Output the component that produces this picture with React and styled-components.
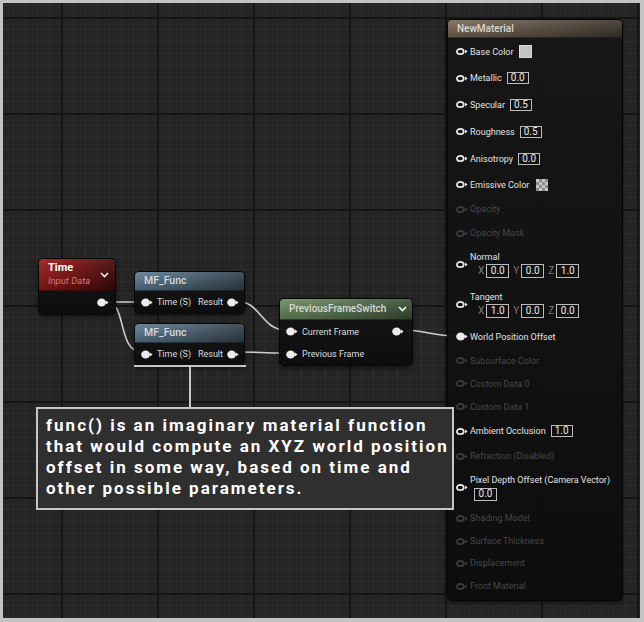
import React from "react";
import styled, { createGlobalStyle } from "styled-components";

const Global = createGlobalStyle`
  html, body { margin: 0; padding: 0; background: #c3c3c3; }
  body { font-family: Roboto, "Noto Sans", Arial, sans-serif; }
`;

const Frame = styled.div`
  width: 644px;
  height: 622px;
  box-sizing: border-box;
  border-style: solid;
  border-color: #c3c3c3;
  border-width: 3px 4px 4px 3px;
  overflow: hidden;
`;

const Canvas = styled.div`
  position: relative;
  width: 100%;
  height: 100%;
  background-color: #252525;
  background-image:
    linear-gradient(to right, #151515 2px, transparent 2px),
    linear-gradient(to bottom, #151515 2px, transparent 2px),
    linear-gradient(to right, #2e2e2e 1px, transparent 1px),
    linear-gradient(to bottom, #2e2e2e 1px, transparent 1px);
  background-size: 96px 96px, 96px 96px, 12px 12px, 12px 12px;
  background-position: 58px 14px, 58px 14px, 10px 2px, 10px 2px;
`;

const Wires = styled.svg`
  position: absolute;
  left: 0;
  top: 0;
  width: 100%;
  height: 100%;
`;

const Node = styled.div`
  position: absolute;
  left: ${(p) => p.x}px;
  top: ${(p) => p.y}px;
  width: ${(p) => p.w}px;
  box-sizing: border-box;
  display: flex;
  flex-direction: column;
  background: linear-gradient(to bottom, rgba(22, 22, 22, 0.97), rgba(12, 12, 12, 0.97));
  border: 1px solid #060606;
  border-radius: 5px;
  box-shadow: 0 2px 5px rgba(0, 0, 0, 0.55);
  overflow: hidden;
`;

const Header = styled.div`
  height: ${(p) => p.h}px;
  box-sizing: border-box;
  display: flex;
  align-items: center;
  justify-content: space-between;
  padding: 0 ${(p) => p.pr || 6}px 0 ${(p) => p.pl || 9}px;
  background:
    linear-gradient(to bottom, rgba(255, 255, 255, 0.08), rgba(0, 0, 0, 0.25)),
    ${(p) => p.bg};
  border-bottom: 1px solid rgba(0, 0, 0, 0.6);
`;

const TitleStack = styled.div`
  display: flex;
  flex-direction: column;
  gap: 1px;
`;

const Title = styled.span`
  color: ${(p) => p.c || "#d8d8d8"};
  font-size: ${(p) => p.fs || 10}px;
  font-weight: ${(p) => p.fw || 500};
  line-height: 12px;
  white-space: nowrap;
`;

const Subtitle = styled.span`
  color: #d27a72;
  font-size: 9.5px;
  font-style: italic;
  line-height: 12px;
`;

const Body = styled.div`
  display: flex;
  flex-direction: column;
  padding: ${(p) => p.pad || "0"};
`;

const PinRow = styled.div`
  height: ${(p) => p.h}px;
  display: flex;
  align-items: center;
  justify-content: ${(p) => p.justify || "flex-start"};
  padding: 0 ${(p) => p.pr || 0}px 0 ${(p) => p.pl || 0}px;
  gap: 4px;
`;

const PinLabel = styled.span`
  color: #dedede;
  font-size: 9px;
  line-height: 12px;
  white-space: nowrap;
  flex: ${(p) => (p.grow ? 1 : "none")};
`;

const PinSvg = styled.svg`
  flex: none;
  display: block;
`;

const Pin = ({ filled, color = "#ececec" }) => (
  <PinSvg width="12" height="9" viewBox="0 0 12 9">
    {filled ? (
      <ellipse cx="4.6" cy="4.5" rx="4.4" ry="4" fill={color} />
    ) : (
      <ellipse cx="4.3" cy="4.5" rx="3.4" ry="2.7" fill="none" stroke={color} strokeWidth="1.7" />
    )}
    <path d="M9 2.6 L11.6 4.5 L9 6.4 Z" fill={color} />
  </PinSvg>
);

const Chevron = () => (
  <PinSvg width="9" height="6" viewBox="0 0 9 6">
    <path d="M1 1 L4.5 4.5 L8 1" fill="none" stroke="#f0f0f0" strokeWidth="1.6" />
  </PinSvg>
);

/* Material panel */
const MatRow = styled.div`
  height: ${(p) => p.h}px;
  display: flex;
  align-items: center;
  gap: 2px;
  padding-left: 8px;
`;

const MatLabel = styled.span`
  color: ${(p) => (p.off ? "#474747" : "#e2e2e2")};
  font-size: 9px;
  line-height: 12px;
  white-space: nowrap;
  margin-right: 2px;
`;

const LabelStack = styled.div`
  display: flex;
  flex-direction: column;
  gap: ${(p) => p.gap || 1}px;
`;

const ValBox = styled.span`
  box-sizing: border-box;
  display: inline-flex;
  align-items: center;
  justify-content: center;
  height: ${(p) => p.h || 12}px;
  min-width: ${(p) => p.w || 22}px;
  padding: 0 3px;
  border: 1px solid #bcbcbc;
  color: #e8e8e8;
  font-size: 10px;
  line-height: 10px;
  margin-left: ${(p) => p.ml || 0}px;
`;

const Swatch = styled.span`
  width: 13px;
  height: 13px;
  box-sizing: border-box;
  margin-left: 1px;
  border: 1px solid #d8d8d8;
  background: #c4c4c4;
`;

const Checker = styled.span`
  width: 12px;
  height: 12px;
  margin-left: 3px;
  background-color: #c4c4c4;
  background-image:
    linear-gradient(45deg, #8a8a8a 25%, transparent 25%, transparent 75%, #8a8a8a 75%),
    linear-gradient(45deg, #8a8a8a 25%, transparent 25%, transparent 75%, #8a8a8a 75%);
  background-size: 6px 6px;
  background-position: 0 0, 3px 3px;
`;

const Fields = styled.div`
  display: flex;
  align-items: center;
  padding-left: ${(p) => p.indent || 8}px;
`;

const Axis = styled.span`
  color: #7a7a7a;
  font-size: 10px;
  line-height: 12px;
  margin: 0 2px 0 ${(p) => p.ml || 0}px;
`;

/* Comment callout */
const Bar = styled.div`
  position: absolute;
  left: ${(p) => p.x}px;
  top: ${(p) => p.y}px;
  width: ${(p) => p.w}px;
  height: ${(p) => p.h}px;
  background: #c6c6c6;
`;

const Callout = styled.div`
  position: absolute;
  left: 33px;
  top: 404px;
  width: 418px;
  height: 103px;
  box-sizing: border-box;
  border: 2px solid #c6c6c6;
  background: #2f2f2f;
  padding: 6px 8px;
  color: #ffffff;
  font-family: Roboto, "Noto Sans", sans-serif;
  font-weight: 700;
  font-size: 17px;
  line-height: 21px;
  letter-spacing: 2px;
  white-space: nowrap;
  z-index: 2;
`;

const matRows = [
  { label: "Base Color", h: 27, swatch: "solid" },
  { label: "Metallic", h: 26, val: "0.0" },
  { label: "Specular", h: 27, val: "0.5" },
  { label: "Roughness", h: 27, val: "0.5" },
  { label: "Anisotropy", h: 27, val: "0.0" },
  { label: "Emissive Color", h: 25, swatch: "checker" },
  { label: "Opacity", h: 24, off: true },
  { label: "Opacity Mask", h: 24, off: true },
  { label: "Normal", h: 39, vec: ["0.0", "0.0", "1.0"] },
  { label: "Tangent", h: 40, vec: ["1.0", "0.0", "0.0"] },
  { label: "World Position Offset", h: 25, linked: true },
  { label: "Subsurface Color", h: 23, off: true },
  { label: "Custom Data 0", h: 23, off: true },
  { label: "Custom Data 1", h: 23, off: true },
  { label: "Ambient Occlusion", h: 26, val: "1.0" },
  { label: "Refraction (Disabled)", h: 24, off: true },
  { label: "Pixel Depth Offset (Camera Vector)", h: 38, below: "0.0" },
  { label: "Shading Model", h: 24, off: true },
  { label: "Surface Thickness", h: 22, off: true },
  { label: "Displacement", h: 22, off: true },
  { label: "Front Material", h: 24, off: true },
];

function MaterialRow({ r }) {
  const pinColor = r.off ? "#3d3d3d" : "#ececec";
  let content;
  if (r.vec) {
    content = (
      <LabelStack>
        <MatLabel>{r.label}</MatLabel>
        <Fields>
          <Axis>X</Axis>
          <ValBox h={14} w={23}>{r.vec[0]}</ValBox>
          <Axis ml={4}>Y</Axis>
          <ValBox h={14} w={23}>{r.vec[1]}</ValBox>
          <Axis ml={4}>Z</Axis>
          <ValBox h={14} w={23}>{r.vec[2]}</ValBox>
        </Fields>
      </LabelStack>
    );
  } else if (r.below) {
    content = (
      <LabelStack gap={2}>
        <MatLabel>{r.label}</MatLabel>
        <Fields indent={4}>
          <ValBox h={13} w={23}>{r.below}</ValBox>
        </Fields>
      </LabelStack>
    );
  } else {
    content = (
      <>
        <MatLabel off={r.off}>{r.label}</MatLabel>
        {r.val && <ValBox ml={1}>{r.val}</ValBox>}
        {r.swatch === "solid" && <Swatch />}
        {r.swatch === "checker" && <Checker />}
      </>
    );
  }
  return (
    <MatRow h={r.h}>
      <Pin filled={r.linked} color={pinColor} />
      {content}
    </MatRow>
  );
}

const wire = "#cfcfcf";

export default function App() {
  return (
    <>
      <Global />
      <Frame>
        <Canvas>
          <Wires viewBox="0 0 637 615">
            <g fill="none" stroke={wire} strokeWidth="1.6">
              <path d="M104 299 L139 299" />
              <path d="M104 299 C 124 299, 114 349, 139 349" />
              <path d="M233 298 C 258 298, 258 327, 283 327" />
              <path d="M233 349 C 258 349, 258 350, 283 350" />
              <path d="M399 327 C 424 327, 428 333, 454 333" />
            </g>
          </Wires>

          {/* Time node */}
          <Node x={35} y={255} w={78}>
            <Header h={32} bg="linear-gradient(100deg, #a01a1a 0%, #7c1010 45%, #3d0909 100%)" pr={6}>
              <TitleStack>
                <Title c="#ffffff" fs={11} fw={700}>Time</Title>
                <Subtitle>Input Data</Subtitle>
              </TitleStack>
              <Chevron />
            </Header>
            <Body>
              <PinRow h={23} justify="flex-end" pr={6}>
                <Pin filled />
              </PinRow>
            </Body>
          </Node>

          {/* MF_Func 1 */}
          <Node x={131} y={268} w={111}>
            <Header h={19} bg="linear-gradient(100deg, #5f7f96 0%, #4b6374 50%, #34424d 100%)">
              <Title fs={10.5}>MF_Func</Title>
            </Header>
            <Body>
              <PinRow h={22} pl={6} pr={5}>
                <Pin filled />
                <PinLabel grow>Time (S)</PinLabel>
                <PinLabel>Result</PinLabel>
                <Pin filled />
              </PinRow>
            </Body>
          </Node>

          {/* MF_Func 2 */}
          <Node x={131} y={320} w={111}>
            <Header h={19} bg="linear-gradient(100deg, #5f7f96 0%, #4b6374 50%, #34424d 100%)">
              <Title fs={10.5}>MF_Func</Title>
            </Header>
            <Body>
              <PinRow h={22} pl={6} pr={5}>
                <Pin filled />
                <PinLabel grow>Time (S)</PinLabel>
                <PinLabel>Result</PinLabel>
                <Pin filled />
              </PinRow>
            </Body>
          </Node>

          {/* PreviousFrameSwitch */}
          <Node x={276} y={295} w={134}>
            <Header h={21} bg="linear-gradient(100deg, #6f9162 0%, #587550 50%, #3b4e36 100%)" pr={5}>
              <Title>PreviousFrameSwitch</Title>
              <Chevron />
            </Header>
            <Body>
              <PinRow h={23} pl={6} pr={8}>
                <Pin filled />
                <PinLabel grow>Current Frame</PinLabel>
                <Pin filled />
              </PinRow>
              <PinRow h={22} pl={6} pr={8}>
                <Pin filled />
                <PinLabel grow>Previous Frame</PinLabel>
              </PinRow>
            </Body>
          </Node>

          {/* NewMaterial */}
          <Node x={444} y={16} w={176}>
            <Header h={18} bg="linear-gradient(100deg, #7f6d58 0%, #63574a 45%, #40382f 100%)">
              <Title>NewMaterial</Title>
            </Header>
            <Body pad="0 0 2px 0">
              {matRows.map((r) => (
                <MaterialRow key={r.label} r={r} />
              ))}
            </Body>
          </Node>

          {/* Comment connector and callout */}
          <Bar x={131} y={362} w={112} h={2} />
          <Bar x={186} y={364} w={2} h={40} />
          <Callout>
            func() is an imaginary material function
            <br />
            that would compute an XYZ world position
            <br />
            offset in some way, based on time and
            <br />
            other possible parameters.
          </Callout>
        </Canvas>
      </Frame>
    </>
  );
}
